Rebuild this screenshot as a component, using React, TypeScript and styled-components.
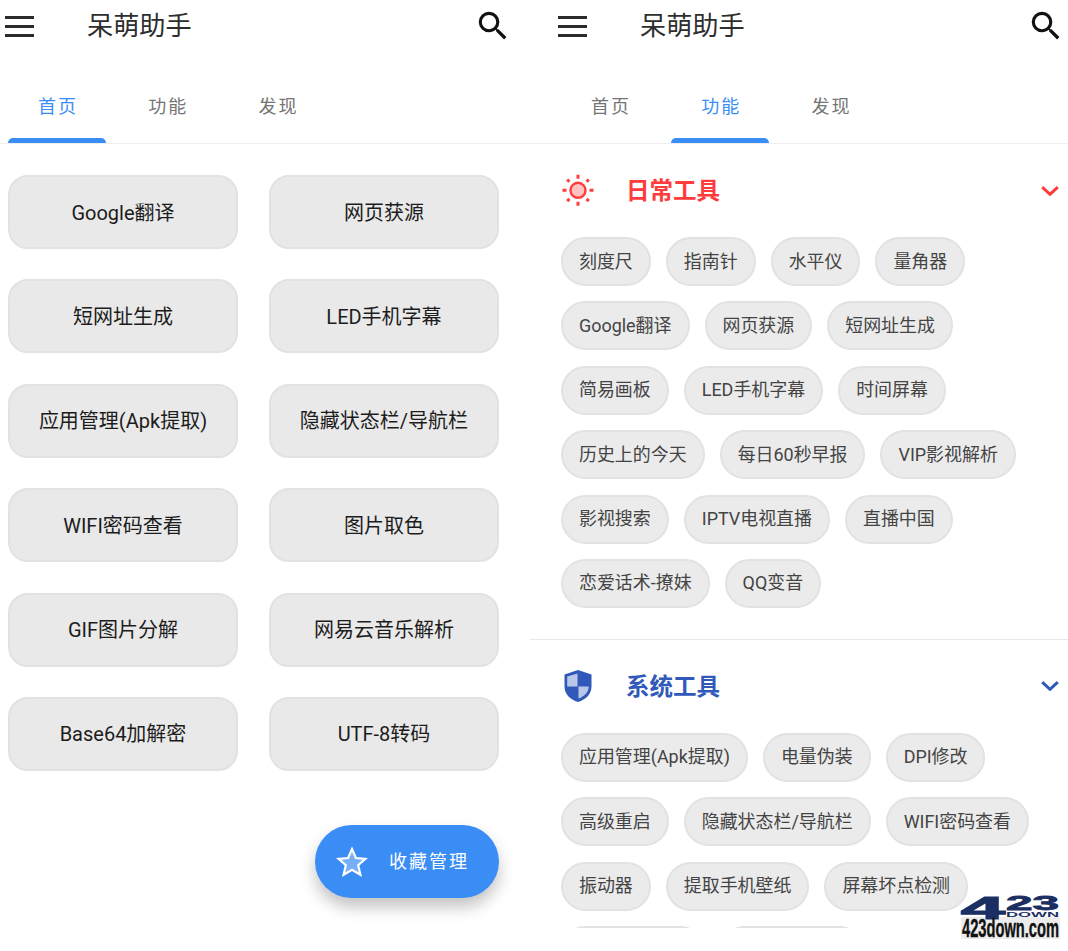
import React from 'react';
import styled, { createGlobalStyle } from 'styled-components';

const FONT = `Roboto, "Noto Sans CJK SC", sans-serif`;
const BLUE = '#3a8df5';
const RED = '#ff3b3b';
const INDIGO = '#3059b9';

const GlobalStyle = createGlobalStyle`
  html, body {
    margin: 0;
    background: #fff;
    font-family: ${FONT};
  }
`;

const Page = styled.div`
  position: relative;
  display: grid;
  grid-template-columns: 530px 538px;
  width: 1068px;
  height: 951px;
  overflow: hidden;
`;

const Panel = styled.section<{ $inset: number }>`
  --inset: ${(p) => p.$inset}px;
  position: relative;
  height: 928px;
  overflow: hidden;
`;

const Header = styled.header`
  display: flex;
  align-items: center;
  width: 530px;
  height: 52px;
  padding-left: calc(var(--inset) + 5px);
  box-sizing: content-box;
`;

const Burger = styled.div`
  display: flex;
  flex-direction: column;
  gap: 6px;
  width: 29px;
  span {
    height: 3px;
    background: #2b2b2b;
  }
`;

const AppTitle = styled.h1`
  margin: 0 0 4px 53px;
  font-size: 26.2px;
  font-weight: 400;
  color: #2e2e2e;
`;

const SearchIcon = styled.svg`
  width: 38px;
  height: 38px;
  margin-left: auto;
  margin-right: 23px;
  fill: #111;
`;

const Tabs = styled.nav`
  display: flex;
  gap: 12.3px;
  height: 74px;
  margin-top: 17px;
  padding-left: calc(var(--inset) + 8px);
  border-bottom: 1px solid #eeeeee;
`;

const Tab = styled.div<{ $active?: boolean }>`
  position: relative;
  display: flex;
  align-items: center;
  justify-content: center;
  width: 98px;
  padding: 0 0 3px 2px;
  box-sizing: border-box;
  font-size: 18px;
  letter-spacing: 2px;
  color: ${(p) => (p.$active ? BLUE : '#757575')};

  &::after {
    content: '';
    display: ${(p) => (p.$active ? 'block' : 'none')};
    position: absolute;
    left: 0;
    right: 0;
    bottom: 0;
    height: 5px;
    background: ${BLUE};
    border-radius: 5px 5px 0 0;
  }
`;

const ButtonGrid = styled.div`
  display: grid;
  grid-template-columns: 230px 230px;
  column-gap: 31px;
  row-gap: 30.4px;
  padding: 31px 0 0 8px;
`;

const ToolButton = styled.div`
  display: flex;
  align-items: center;
  justify-content: center;
  height: 74px;
  padding-bottom: 2px;
  box-sizing: border-box;
  background: #e9e9e9;
  border: 2px solid #e2e2e2;
  border-radius: 20px;
  font-size: 20px;
  color: #1c1c1c;
`;

const Fab = styled.div`
  position: absolute;
  top: 825px;
  left: 315px;
  display: flex;
  align-items: center;
  width: 184px;
  height: 73px;
  padding-left: 21px;
  box-sizing: border-box;
  background: ${BLUE};
  border-radius: 37px;
  box-shadow: 0 9px 16px rgba(0, 0, 0, 0.24);
  color: #fff;
`;

const FabStar = styled.svg`
  width: 32px;
  height: 32px;
  margin-right: 21px;
  fill: rgba(255, 255, 255, 0.3);
  stroke: #fff;
  stroke-width: 2.2;
`;

const FabLabel = styled.span`
  margin-bottom: 4px;
  font-size: 18px;
  letter-spacing: 2px;
`;

const Section = styled.div<{ $divider?: boolean }>`
  padding-bottom: 31px;
  border-bottom: ${(p) => (p.$divider ? '1px solid #e8e8e8' : 'none')};
`;

const SectionHead = styled.div<{ $color: string }>`
  display: flex;
  align-items: center;
  height: 93px;
  padding: 0 9px 0 calc(var(--inset) + 8px);
  color: ${(p) => p.$color};
`;

const SectionIcon = styled.svg`
  width: 34px;
  height: 34px;
  margin-right: 31px;
`;

const SectionTitle = styled.h2`
  margin: 0 0 3px;
  font-size: 23.5px;
  font-weight: 700;
`;

const Chevron = styled.svg`
  width: 18px;
  height: 10px;
  margin-left: auto;
  fill: none;
  stroke: currentColor;
  stroke-width: 3;
`;

const ChipWrap = styled.div`
  display: flex;
  flex-wrap: wrap;
  gap: 15.4px 15px;
  padding: 0 30px 0 calc(var(--inset) + 8px);
`;

const Chip = styled.div<{ $blank?: boolean }>`
  display: flex;
  align-items: center;
  height: 49px;
  padding: 0 16px 4px;
  box-sizing: border-box;
  background: #ebebeb;
  border: 2px solid #e2e2e2;
  border-radius: 25px;
  font-size: 17.95px;
  color: #444;
  min-width: ${(p) => (p.$blank ? '144px' : '0')};
`;

const Watermark = styled.svg`
  position: absolute;
  left: 961px;
  top: 895px;
  width: 99px;
  height: 44px;
  overflow: visible;
`;

const homeButtons = [
  'Google翻译', '网页获源', '短网址生成', 'LED手机字幕', '应用管理(Apk提取)', '隐藏状态栏/导航栏',
  'WIFI密码查看', '图片取色', 'GIF图片分解', '网易云音乐解析', 'Base64加解密', 'UTF-8转码',
];

const dailyTools = [
  '刻度尺', '指南针', '水平仪', '量角器', 'Google翻译', '网页获源', '短网址生成', '简易画板',
  'LED手机字幕', '时间屏幕', '历史上的今天', '每日60秒早报', 'VIP影视解析', '影视搜索',
  'IPTV电视直播', '直播中国', '恋爱话术-撩妹', 'QQ变音',
];

const systemTools = [
  '应用管理(Apk提取)', '电量伪装', 'DPI修改', '高级重启', '隐藏状态栏/导航栏', 'WIFI密码查看',
  '振动器', '提取手机壁纸', '屏幕坏点检测',
];

const TopBar = ({ active }: { active: number }) => (
  <>
    <Header>
      <Burger>
        <span />
        <span />
        <span />
      </Burger>
      <AppTitle>呆萌助手</AppTitle>
      <SearchIcon viewBox="0 0 24 24">
        <path d="M15.5 14h-.79l-.28-.27A6.471 6.471 0 0 0 16 9.5 6.5 6.5 0 1 0 9.5 16c1.61 0 3.09-.59 4.23-1.57l.27.28v.79l5 4.99L20.49 19l-4.99-5zm-6 0C7.01 14 5 11.99 5 9.5S7.01 5 9.5 5 14 7.01 14 9.5 11.99 14 9.5 14z" />
      </SearchIcon>
    </Header>
    <Tabs>
      {['首页', '功能', '发现'].map((t, i) => (
        <Tab key={t} $active={i === active}>
          {t}
        </Tab>
      ))}
    </Tabs>
  </>
);

const SunIcon = () => (
  <SectionIcon viewBox="0 0 34 34">
    <g transform="translate(0 -0.700)">
      <circle cx="17" cy="17" r="7.5" fill="#ffc2c2" stroke={RED} strokeWidth="2.4" />
      <g stroke={RED} strokeWidth="3">
        <path d="M17 1.500v4M17 28.500v4M1.500 17h4M28.500 17h4" />
        <path d="M6.200 6.200l2.200 2.200M25.600 25.600l2.200 2.200M6.200 27.800l2.200-2.200M25.600 8.400l2.200-2.200" />
      </g>
    </g>
  </SectionIcon>
);

const ShieldIcon = () => (
  <SectionIcon viewBox="0 0 34 34">
    <path d="M17 1l13.500 4.500v12c0 7.500-5.500 13-13.500 15.500C9 30.500 3.500 25 3.500 17.500v-12z" fill={INDIGO} />
    <path d="M16.500 4.500v13H6.200v-10zM17.500 17.500h10.300c-.3 5.500-4.300 10-10.300 12z" fill="#b9c7ea" />
  </SectionIcon>
);

const ChevronDown = () => (
  <Chevron viewBox="0 0 18 10">
    <path d="M1.200 1.200L9 8.300l7.800-7.100" />
  </Chevron>
);

export default function App() {
  return (
    <Page>
      <GlobalStyle />
      <Panel $inset={0}>
        <TopBar active={0} />
        <ButtonGrid>
          {homeButtons.map((b) => (
            <ToolButton key={b}>{b}</ToolButton>
          ))}
        </ButtonGrid>
        <Fab>
          <FabStar viewBox="0 0 32 32">
            <path d="M16 3l3.900 9 9.600.8-7.300 6.400 2.200 9.500L16 23.700l-8.400 5 2.200-9.500-7.300-6.400 9.600-.8z" />
          </FabStar>
          <FabLabel>收藏管理</FabLabel>
        </Fab>
      </Panel>
      <Panel $inset={23}>
        <TopBar active={1} />
        <Section $divider>
          <SectionHead $color={RED}>
            <SunIcon />
            <SectionTitle>日常工具</SectionTitle>
            <ChevronDown />
          </SectionHead>
          <ChipWrap>
            {dailyTools.map((c) => (
              <Chip key={c}>{c}</Chip>
            ))}
          </ChipWrap>
        </Section>
        <Section>
          <SectionHead $color={INDIGO}>
            <ShieldIcon />
            <SectionTitle>系统工具</SectionTitle>
            <ChevronDown />
          </SectionHead>
          <ChipWrap>
            {systemTools.map((c) => (
              <Chip key={c}>{c}</Chip>
            ))}
            <Chip $blank />
            <Chip $blank />
          </ChipWrap>
        </Section>
      </Panel>
      <Watermark viewBox="0 0 99 44">
        <rect x="0" y="22" width="99" height="22" fill="#ececec" />
        <text x="0" y="23.500" textLength="44" lengthAdjust="spacingAndGlyphs" fontFamily="Liberation Sans" fontWeight="700" fontSize="32" fill="#1c2f63" stroke="#1c2f63" strokeWidth="1.2">4</text>
        <text x="45" y="14.500" textLength="53" lengthAdjust="spacingAndGlyphs" fontFamily="Liberation Sans" fontWeight="700" fontSize="20" fill="#1c2f63" stroke="#1c2f63" strokeWidth="0.8">23</text>
        <text x="45" y="22" textLength="53" lengthAdjust="spacingAndGlyphs" fontFamily="Liberation Sans" fontWeight="700" fontSize="8" fill="#1c2f63">DOWN</text>
        <text x="1" y="42" textLength="97" lengthAdjust="spacingAndGlyphs" fontFamily="Liberation Sans" fontWeight="700" fontSize="26" fill="#111" stroke="#111" strokeWidth="0.4">423down.com</text>
      </Watermark>
    </Page>
  );
}
